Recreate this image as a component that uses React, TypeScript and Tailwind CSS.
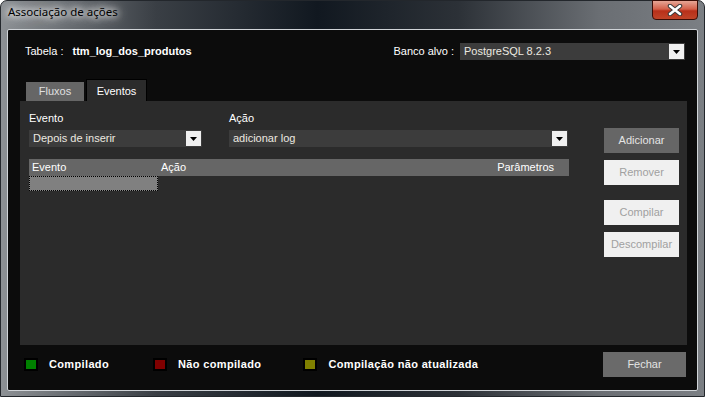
import React from "react";

const ui = "font-['Liberation_Sans',Arial,sans-serif]";

function Arrow() {
  return (
    <div className="w-[15px] h-[15px] bg-[#f0f0f0] flex items-center justify-center shrink-0">
      <svg width="7" height="4" viewBox="0 0 7 4">
        <path d="M0 0H7L3.5 4Z" fill="#000" />
      </svg>
    </div>
  );
}

function Combo({ value, className }: { value: string; className: string }) {
  return (
    <div className={`h-[17px] bg-[#3c3c3c] flex items-center justify-between pl-[4px] pr-[1px] ${className}`}>
      <span className="text-[11px] text-[#ece9e0] leading-none">{value}</span>
      <Arrow />
    </div>
  );
}

function Btn({ label, disabled }: { label: string; disabled?: boolean }) {
  return (
    <div
      className={`w-[75px] h-[25px] flex items-center justify-center text-[11px] ${
        disabled ? "bg-[#f0f0f0] text-[#a0a0a0]" : "bg-[#666666] text-[#e4e4e4]"
      }`}
    >
      {label}
    </div>
  );
}

function Legend({ color, label, className }: { color: string; label: string; className?: string }) {
  return (
    <div className={`flex items-center gap-[11px] ${className ?? ""}`}>
      <div className="w-[14px] h-[13px] bg-black p-[2px]">
        <div className={`w-full h-full ${color}`} />
      </div>
      <span className="text-[11px] font-bold text-white tracking-[0.35px]">{label}</span>
    </div>
  );
}

export default function App() {
  return (
    <div className={`w-[705px] h-[397px] flex flex-col rounded-t-[7px] border border-[#23272c] bg-[linear-gradient(90deg,#8d9195_0%,#3a3f45_22%,#111820_45%,#2c3137_65%,#6a6e73_85%,#7b7f84_100%)] ${ui}`}>
      <div className="h-[28px] flex justify-between shrink-0">
        <span className="pl-[7px] pt-[5px] text-[11.5px] text-black font-['Noto_Sans',sans-serif] leading-none [text-shadow:0_0_6px_#fff,0_0_10px_#fff,0_0_14px_#fff]">
          Associação de ações
        </span>
        <div className="mr-[6px] -mt-px w-[46px] h-[20px] rounded-b-[4px] border border-[#3b0d06] bg-[linear-gradient(180deg,#e6a696_0%,#d4604a_45%,#b8301a_55%,#c04428_100%)] flex items-center justify-center">
          <svg width="16" height="12" viewBox="0 0 16 12">
            <path d="M3 2L13 10M13 2L3 10" stroke="#3a3a3a" strokeWidth="4.5" strokeLinecap="round" />
            <path d="M3 2L13 10M13 2L3 10" stroke="#fff" strokeWidth="2.5" strokeLinecap="round" />
          </svg>
        </div>
      </div>

      <div className="mx-[6px] h-[362px] border border-[#d0d4d8] rounded-[2px] bg-[#0c0c0c] flex flex-col">
        <div className="flex items-center h-[17px] mt-[13px] pl-[17px] pr-[12px]">
          <span className="text-[11px] text-white">Tabela :</span>
          <span className="ml-[9px] text-[11px] font-bold text-white">ttm_log_dos_produtos</span>
          <span className="ml-auto text-[11px] text-white">Banco alvo :</span>
          <Combo value="PostgreSQL 8.2.3" className="ml-[6px] w-[225px]" />
        </div>

        <div className="ml-[18px] mt-[19px] flex items-end h-[22px] gap-[2px]">
          <div className="w-[58px] h-[19px] bg-[#666666] text-[#e0e0e0] text-[11px] flex items-center justify-center">
            Fluxos
          </div>
          <div className="w-[61px] h-[23px] -mb-px bg-[#2b2b2b] border border-b-0 border-black text-white text-[11px] flex items-center justify-center">
            Eventos
          </div>
        </div>

        <div className="ml-[12px] w-[667px] h-[244px] bg-[#2b2b2b] flex">
          <div className="w-[584px] pl-[9px] pt-[10px] flex flex-col">
            <div className="flex gap-[27px]">
              <div className="flex flex-col gap-[5px]">
                <span className="text-[11px] text-white leading-[14px]">Evento</span>
                <Combo value="Depois de inserir" className="w-[173px]" />
              </div>
              <div className="flex flex-col gap-[5px]">
                <span className="text-[11px] text-white leading-[14px]">Ação</span>
                <Combo value="adicionar log" className="w-[339px]" />
              </div>
            </div>
            <div className="mt-[12px] w-[540px] h-[17px] bg-[#666666] flex items-center text-[11px] text-white">
              <span className="w-[132px] pl-[3px]">Evento</span>
              <span>Ação</span>
              <span className="ml-auto pr-[15px]">Parâmetros</span>
            </div>
            <div className="w-[129px] h-[15px] bg-[#808080] border border-dotted border-black" />
          </div>
          <div className="pt-[27px] flex flex-col">
            <Btn label="Adicionar" />
            <div className="mt-[7px]">
              <Btn label="Remover" disabled />
            </div>
            <div className="mt-[15px]">
              <Btn label="Compilar" disabled />
            </div>
            <div className="mt-[7px]">
              <Btn label="Descompilar" disabled />
            </div>
          </div>
        </div>

        <div className="flex items-center mt-[7px] pl-[16px] pr-[11px]">
          <Legend color="bg-[#008000]" label="Compilado" />
          <Legend color="bg-[#800000]" label="Não compilado" className="ml-[44px]" />
          <Legend color="bg-[#808000]" label="Compilação não atualizada" className="ml-[42px]" />
          <div className="ml-auto w-[83px] h-[25px] bg-[#6a6a6a] text-[#e4e4e4] text-[11px] flex items-center justify-center">
            Fechar
          </div>
        </div>
      </div>
    </div>
  );
}
